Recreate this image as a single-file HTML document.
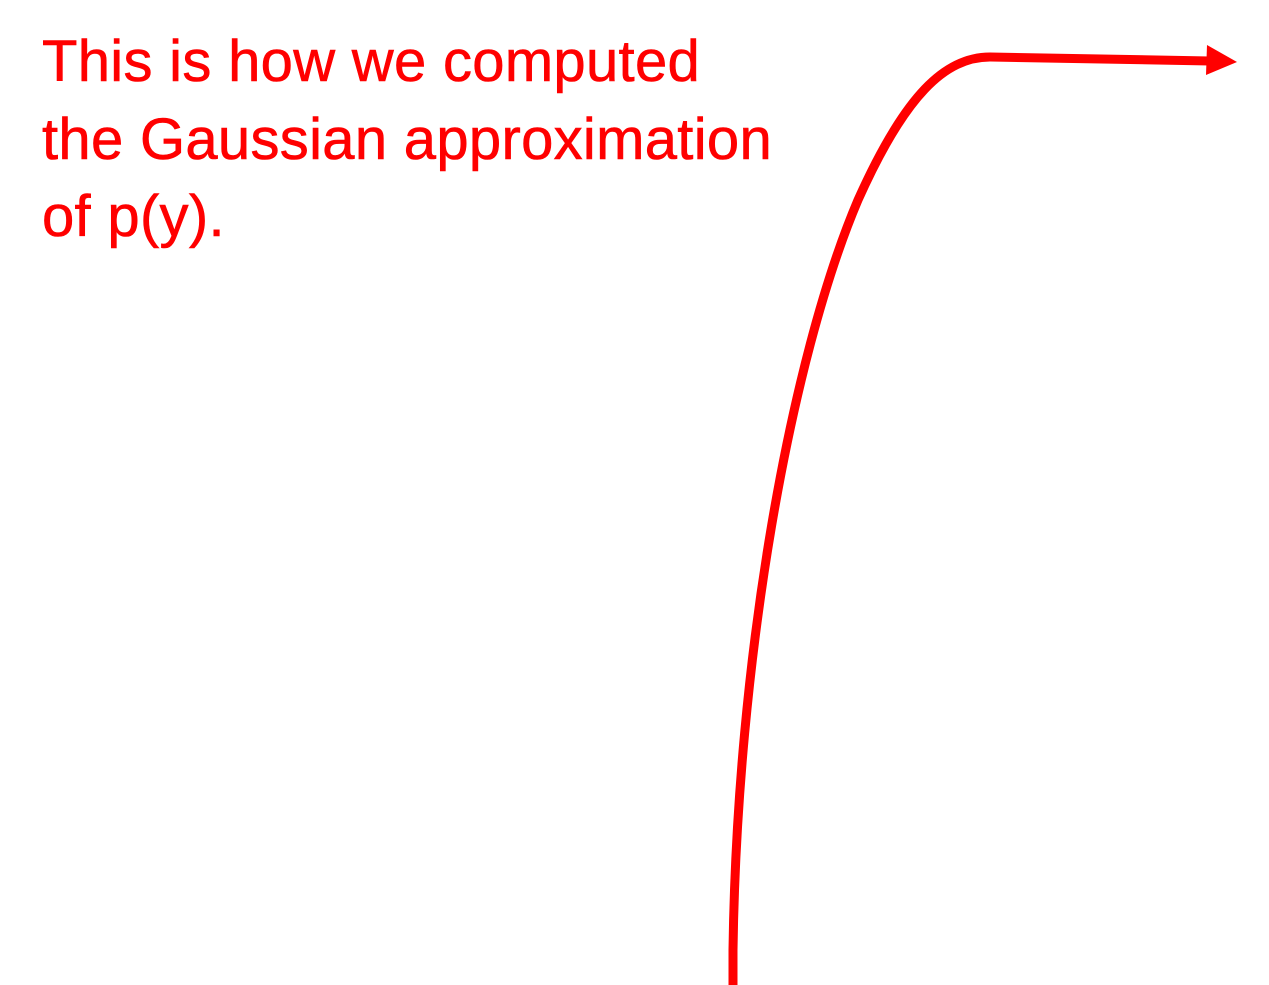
<!DOCTYPE html>
<html><head><meta charset="utf-8"><style>
html,body{margin:0;padding:0;background:#fff;width:1269px;height:985px;overflow:hidden}
.t{position:absolute;left:42px;top:23px;color:#ff0000;font-family:"Liberation Sans",sans-serif;font-size:58px;line-height:77.5px;white-space:nowrap;letter-spacing:0.3px;-webkit-text-stroke:0.6px #ff0000}
svg{position:absolute;left:0;top:0}
</style></head><body>
<div class="t">This is how we computed<br>the Gaussian approximation<br>of p(y).</div>
<svg width="1269" height="985">
<path d="M733,985 L733,950 C737,660 790,360 858,200 C905,95 945,57 990,57 L1210,61" fill="none" stroke="#ff0000" stroke-width="9"/>
<polygon points="1207,45 1237,62 1206,75" fill="#ff0000"/>
</svg>
</body></html>
